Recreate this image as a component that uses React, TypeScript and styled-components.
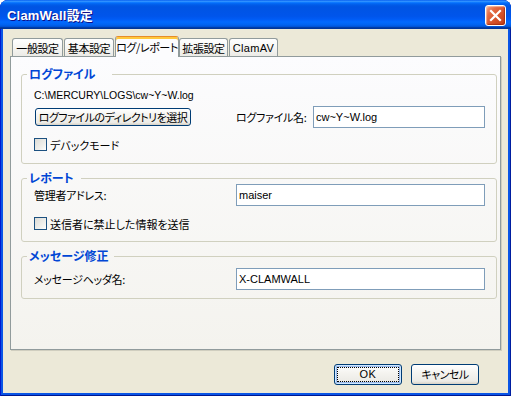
import React from 'react';
import styled, { createGlobalStyle, css } from 'styled-components';

const JP = `"Noto Sans CJK JP", sans-serif`;
const LATIN = `"Liberation Sans", "Noto Sans CJK JP", sans-serif`;

const GlobalStyle = createGlobalStyle`
  html, body {
    margin: 0;
    padding: 0;
    background: #ffffff;
  }
  body {
    font-family: ${JP};
    font-feature-settings: "palt";
  }
`;

const tabs = [
  { label: '一般設定', width: 51 },
  { label: '基本設定', width: 50 },
  { label: 'ログ/レポート', width: 64, active: true },
  { label: '拡張設定', width: 49 },
  { label: 'ClamAV', width: 49, latin: true },
];

const App: React.FC = () => {
  return (
    <>
      <GlobalStyle />
      <Window>
        <TitleBar>
          <Title>ClamWall設定</Title>
          <CloseButton>
            <svg width="19" height="19" viewBox="0 0 19 19">
              <path d="M5 5 L14 14 M14 5 L5 14" stroke="#fff" strokeWidth="2.2" strokeLinecap="square" />
            </svg>
          </CloseButton>
        </TitleBar>

        <Client>
          <TabStrip>
            {tabs.map((t) => (
              <Tab key={t.label} $w={t.width} $active={t.active} $latin={t.latin}>
                {t.label}
              </Tab>
            ))}
          </TabStrip>

          <Panel>
            <Group $pt={8} $pb={12}>
              <Legend $pr={17}>ログファイル</Legend>
              <PathText>C:\MERCURY\LOGS\cw~Y~W.log</PathText>
              <FileRow $mt={4}>
                <PushButton $w={156} $h={18}>ログファイルのディレクトリを選択</PushButton>
                <FieldLabel>ログファイル名:</FieldLabel>
                <TextBox>cw~Y~W.log</TextBox>
              </FileRow>
              <CheckRow $mt={10}>
                <CheckBox />
                <span>デバックモード</span>
              </CheckRow>
            </Group>

            <Group $pt={0} $pb={11}>
              <Legend $pr={7}>レポート</Legend>
              <FieldRow>
                <FieldLabel>管理者アドレス:</FieldLabel>
                <TextBox>maiser</TextBox>
              </FieldRow>
              <CheckRow $mt={11}>
                <CheckBox />
                <span>送信者に禁止した情報を送信</span>
              </CheckRow>
            </Group>

            <Group $pt={6} $pb={8}>
              <Legend $pr={6}>メッセージ修正</Legend>
              <FieldRow>
                <FieldLabel>メッセージヘッダ名:</FieldLabel>
                <TextBox>X-CLAMWALL</TextBox>
              </FieldRow>
            </Group>
          </Panel>

          <Footer>
            <PushButton $w={68} $h={21} $default $latin>OK</PushButton>
            <PushButton $w={68} $h={21}>キャンセル</PushButton>
          </Footer>
        </Client>
      </Window>
    </>
  );
};

const Window = styled.div`
  width: 511px;
  height: 396px;
  box-sizing: border-box;
  display: flex;
  flex-direction: column;
  background: #0a55e6;
  border-radius: 8px 8px 0 0;
  overflow: hidden;
  box-shadow: inset 1px 0 #0019cf, inset -1px 0 #001ea0, inset 0 -1px #001790;
`;

const TitleBar = styled.div`
  height: 29px;
  flex: none;
  display: flex;
  align-items: center;
  justify-content: space-between;
  padding: 0 5px 0 7px;
  background: linear-gradient(
    180deg,
    #0058ee 0%,
    #3593ff 4%,
    #288eff 6%,
    #127dff 8%,
    #036ffc 10%,
    #0262ee 14%,
    #0057e5 20%,
    #0054e3 24%,
    #0055eb 56%,
    #005bf5 66%,
    #026afe 76%,
    #0062ef 86%,
    #0052d6 92%,
    #0040ab 94%,
    #003092 100%
  );
`;

const Title = styled.div`
  font-family: ${LATIN};
  font-weight: bold;
  font-size: 13px;
  color: #ffffff;
  text-shadow: 1px 1px #0f1089;
  letter-spacing: 0.2px;
`;

const CloseButton = styled.div`
  width: 21px;
  height: 21px;
  box-sizing: border-box;
  margin-top: 1px;
  display: flex;
  align-items: center;
  justify-content: center;
  border: 1px solid #ffffff;
  border-radius: 3px;
  background: linear-gradient(135deg, #f3a587 0%, #e46a43 30%, #d5522a 60%, #c13d16 100%);
  box-shadow: inset -1px -1px 1px rgba(120, 20, 0, 0.45), inset 1px 1px 1px rgba(255, 220, 200, 0.6);
`;

const Client = styled.div`
  flex: 1;
  margin: 0 3px 3px;
  background: #ece9d8;
  padding: 7px 7px 0;
  display: flex;
  flex-direction: column;
`;

const TabStrip = styled.div`
  height: 20px;
  display: flex;
  align-items: flex-end;
  padding-left: 2px;
`;

const Tab = styled.div<{ $w: number; $active?: boolean; $latin?: boolean }>`
  box-sizing: border-box;
  width: ${({ $w }) => $w}px;
  height: 18px;
  margin-right: 1px;
  border: 1px solid #919b9c;
  border-bottom: none;
  border-radius: 3px 3px 0 0;
  background: linear-gradient(180deg, #ffffff 0%, #fafaf8 30%, #ecebe6 100%);
  display: flex;
  align-items: center;
  justify-content: center;
  font-family: ${({ $latin }) => ($latin ? LATIN : JP)};
  font-size: 11px;
  line-height: 1;
  letter-spacing: ${({ $latin }) => ($latin ? '0.3px' : '-0.4px')};
  white-space: nowrap;
  color: #000000;
  padding-top: 1px;

  ${({ $active }) =>
    $active &&
    css`
      height: 21px;
      margin: 0 0 -1px 0;
      position: relative;
      z-index: 1;
      background: #fcfcfe;
      border-top: 1px solid #e68b2c;
      box-shadow: inset 0 2px #ffc83c;
      padding-top: 0;
    `}
`;

const Panel = styled.div`
  height: 294px;
  box-sizing: border-box;
  border: 1px solid #919b9c;
  background: linear-gradient(180deg, #fcfcfe 0%, #f4f3ee 100%);
  box-shadow: 1px 1px 0 #d0cebf;
  padding: 11px 3px 0 10px;
  display: flex;
  flex-direction: column;
  gap: 8px;
`;

const Group = styled.fieldset<{ $pt: number; $pb: number }>`
  margin: 0;
  min-width: 0;
  border: 1px solid #d0d0bf;
  border-radius: 3px;
  padding: ${({ $pt }) => $pt}px 11px ${({ $pb }) => $pb}px 12px;
  display: flex;
  flex-direction: column;
`;

const Legend = styled.legend<{ $pr: number }>`
  margin-left: -7px;
  padding: 0 ${({ $pr }) => $pr}px 0 2px;
  font-family: ${JP};
  font-weight: bold;
  font-size: 12px;
  line-height: 12px;
  color: #0046d5;
`;

const PathText = styled.div`
  font-family: ${LATIN};
  font-size: 10.5px;
  line-height: 14px;
  color: #000000;
`;

const FieldRow = styled.div`
  display: grid;
  grid-template-columns: 202px 1fr;
  align-items: center;
  height: 22px;
`;

const FileRow = styled.div<{ $mt: number }>`
  display: grid;
  grid-template-columns: 202px 77px 1fr;
  align-items: center;
  height: 22px;
  margin-top: ${({ $mt }) => $mt}px;

  & > button {
    margin-left: 1px;
  }
`;

const FieldLabel = styled.span`
  font-size: 11px;
  line-height: 14px;
  letter-spacing: -0.3px;
  color: #000000;
  white-space: nowrap;
`;

const TextBox = styled.div`
  box-sizing: border-box;
  height: 22px;
  border: 1px solid #7f9db9;
  background: #ffffff;
  padding: 0 2px;
  display: flex;
  align-items: center;
  font-family: ${LATIN};
  font-size: 11px;
  color: #000000;
`;

const CheckRow = styled.div<{ $mt: number }>`
  display: flex;
  align-items: center;
  gap: 3px;
  height: 13px;
  margin-top: ${({ $mt }) => $mt}px;
  font-size: 11px;
  color: #000000;
`;

const CheckBox = styled.span`
  width: 13px;
  height: 13px;
  box-sizing: border-box;
  flex: none;
  border: 1px solid #1c5180;
  background: linear-gradient(135deg, #dcdcd7 0%, #f2f2ee 70%, #ffffff 100%);
`;

const PushButton = styled.button<{ $w: number; $h: number; $default?: boolean; $latin?: boolean }>`
  box-sizing: border-box;
  width: ${({ $w }) => $w}px;
  height: ${({ $h }) => $h}px;
  padding: 0;
  border: 1px solid #003c74;
  border-radius: 3px;
  background: linear-gradient(180deg, #ffffff 0%, #f5f4f0 40%, #ecebe6 85%, #d6d0c5 100%);
  font-family: ${({ $latin }) => ($latin ? LATIN : JP)};
  font-feature-settings: "palt";
  font-size: 11px;
  line-height: 1;
  letter-spacing: ${({ $latin }) => ($latin ? '0.5px' : '-0.5px')};
  color: #000000;
  white-space: nowrap;

  ${({ $default }) =>
    $default &&
    css`
      box-shadow: inset 0 0 0 1px #cee7ff, inset 0 0 0 2px #98b8ea;
      outline: 1px dotted #000000;
      outline-offset: -4px;
    `}
`;

const Footer = styled.div`
  display: flex;
  justify-content: flex-end;
  gap: 9px;
  padding: 14px 22px 0 0;
`;

export default App;
